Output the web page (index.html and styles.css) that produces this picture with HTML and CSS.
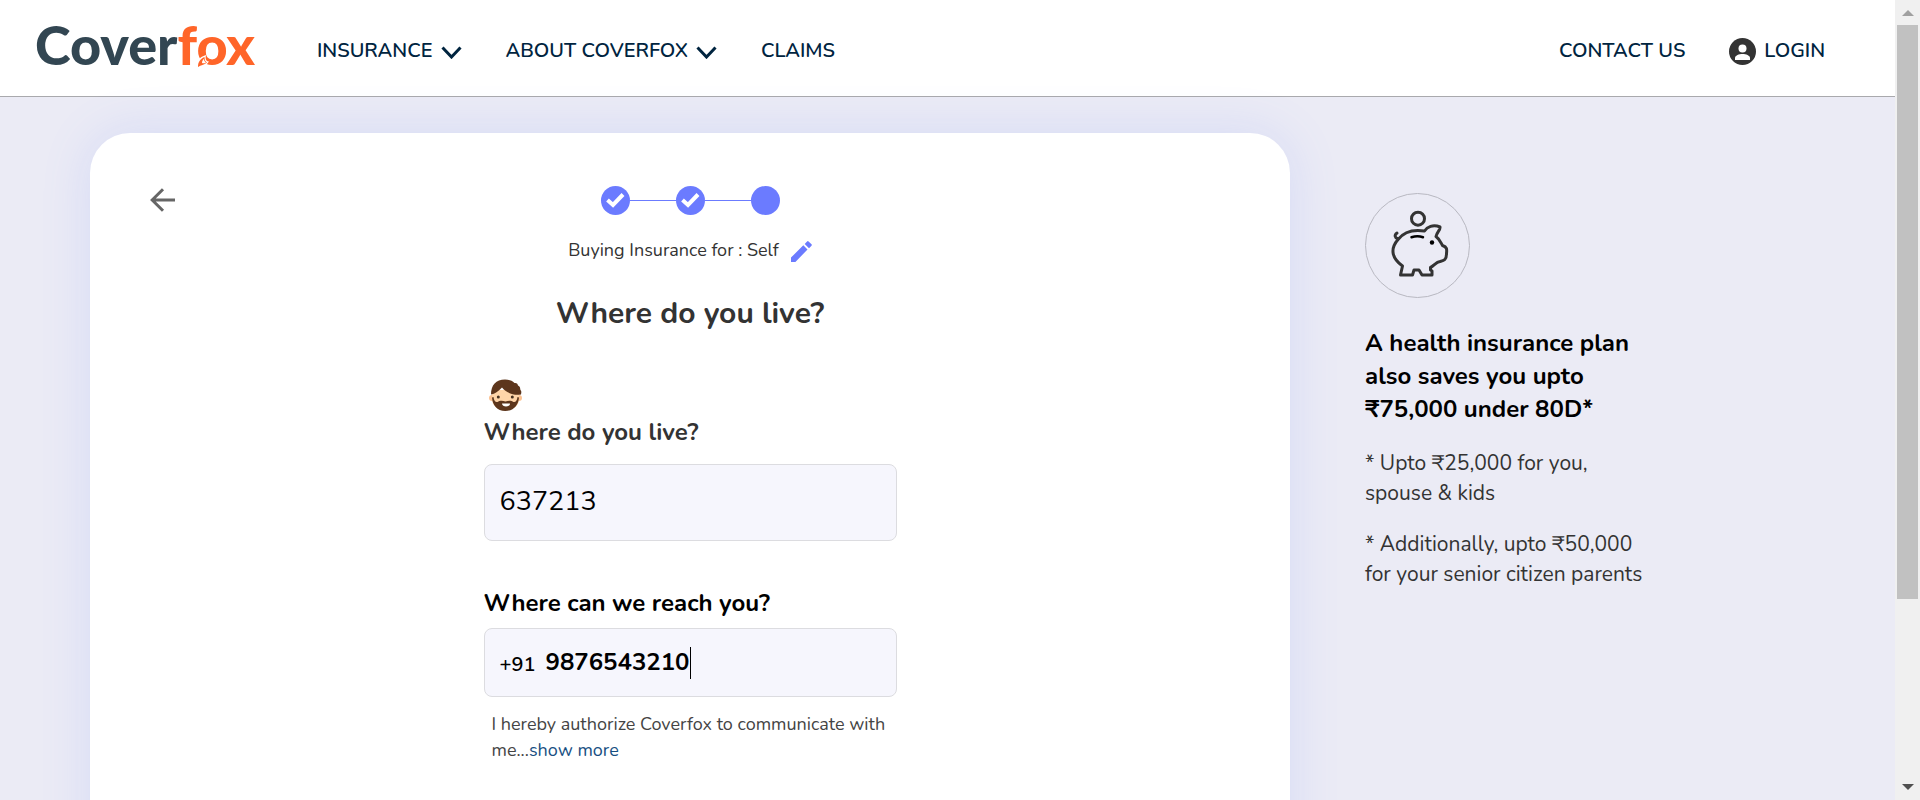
FILE: index.html
```html
<!DOCTYPE html>
<html lang="en">
<head>
<meta charset="utf-8">
<meta name="viewport" content="width=device-width, initial-scale=1">
<title>Coverfox</title>
<link rel="stylesheet" href="styles.css">
</head>
<body>
<div class="window">
  <div class="page">
    <header class="header">
      <a class="logo" href="#" aria-label="Coverfox">Cover<span class="logo-fox">fox</span><svg class="logo-tail" viewBox="0 0 12 13" aria-hidden="true"><path d="M0 13C-1 7 2 2 9 0C8 4 9 6 12 6.500C9 11 5 11 0 13Z" fill="#fff"/><path d="M1 12C1 7 3 4 7.500 2C7.500 5 8.500 7 10 7.500C7 10 4 10 1 12z" fill="#ff6529"/><path d="M5 8C5 6 6 4.500 7 4C7 6 8 7 9 7.500C7.500 8.500 6 8.500 5 8z" fill="#fff"/></svg></a>
      <nav class="nav">
        <a href="#">INSURANCE <svg class="chevron" viewBox="0 0 21 13"><path d="M1.500 1.500L10.500 11L19.500 1.500"/></svg></a>
        <a href="#">ABOUT COVERFOX <svg class="chevron" viewBox="0 0 21 13"><path d="M1.500 1.500L10.500 11L19.500 1.500"/></svg></a>
        <a href="#">CLAIMS</a>
      </nav>
      <nav class="nav account">
        <a href="#">CONTACT US</a>
        <a href="#"><svg class="user" viewBox="0 0 27 27"><circle cx="13.500" cy="13.500" r="13.500" fill="#333"/><circle cx="13.500" cy="10.500" r="4" fill="#fff"/><path d="M6 22v-2c0-2.500 4-4 7.500-4s7.500 1.500 7.500 4v2z" fill="#fff"/></svg>LOGIN</a>
      </nav>
    </header>
    <main class="content">
      <section class="card">
        <button class="back" type="button" aria-label="Back"><svg viewBox="0 0 25 24"><path d="M25 12H3M13 1.200L2.200 12L13 22.800"/></svg></button>
        <form class="quote">
          <ol class="steps" aria-label="Progress">
            <li><svg viewBox="0 0 29 29"><path d="M6.500 14L12 19L22 8.500"/></svg></li>
            <li><svg viewBox="0 0 29 29"><path d="M6.500 14L12 19L22 8.500"/></svg></li>
            <li></li>
          </ol>
          <p class="buying">Buying Insurance for : Self
            <button type="button" class="edit" aria-label="Edit"><svg viewBox="0 0 21 21"><path d="M0 16.600V21h4.400L16.500 8.500L12.300 4.300zM13.700 3l4.300 4.200l2.500-2.500q.7-.7 0-1.400L17.600.5q-.8-.8-1.500 0z"/></svg></button></p>
          <h1>Where do you live?</h1>
          <svg class="face" viewBox="0 0 33 32" aria-hidden="true"><circle cx="3" cy="19" r="3" fill="#fcc393"/><circle cx="30" cy="19" r="3" fill="#fcc393"/><path d="M3 11h27v9c0 7-6 11-13.500 11S3 27 3 20z" fill="#ffd5a8"/><path d="M2 15.500C2 6 7 .5 16 .5c4 0 7 1 9.500 3.500c2-.5 3.500 1 3.500 2.500c2.500 1 2 3 2.500 4.500c1 1 1 2 .5 4.500c-7 1-14-1-19-7C9 12.500 6 15 2 15.500z" fill="#5d361c"/><path d="M3 18.500C3.500 26 8 32 16.300 32S29.500 26 30 18.500l-1.500-.5c-.5 4-2 5.500-4 5c-2-1.500-5-1.500-8-.5c-3-1-6-1-8 .5c-2 .5-3.500-1-4-5z" fill="#5d361c"/><path d="M13 24.500h8c0 2-2 3-4 3s-4-1-4-3z" fill="#fff"/><circle cx="9.300" cy="18" r="1.500" fill="#45301f"/><circle cx="23.300" cy="18" r="1.500" fill="#45301f"/></svg>
          <label class="label" for="pin">Where do you live?</label>
          <input class="box pin" id="pin" type="text" inputmode="numeric" value="637213">
          <label class="label label-phone" for="phone">Where can we reach you?</label>
          <div class="box phone"><span class="code">+91</span><input id="phone" type="tel" value="9876543210"><span class="caret"></span></div>
          <p class="consent">I hereby authorize Coverfox to communicate with me...<a href="#">show more</a></p>
        </form>
      </section>
      <aside class="benefit">
        <svg class="pig" viewBox="0 0 105 105" aria-hidden="true"><circle cx="52.500" cy="52.500" r="52" fill="none" stroke="#b8b8c1"/><g fill="none" stroke="#333" stroke-width="3" stroke-linejoin="round" stroke-linecap="round"><circle cx="53" cy="25.700" r="6.500"/><path d="M32 40c-3 2-2 5 .5 5.500"/><path d="M33 46.500C38 40 47 36 59.500 38C62 34 68 31 75 34C75.500 37 72 39 71 43.500C74.500 46 75.500 49 77.500 52.500C82 54 82 56 81.500 60.500C81.500 67 79 67.500 75 68.500C71 69 69 73 65.500 74.500V77L67 78V82H57L54 77H49L47.500 82H35.500L37.500 73C28 66 24 57 33 46.500z"/></g><path d="M46.500 44.200Q52.500 42.500 58 44.200" fill="none" stroke="#000" stroke-width="2.500" stroke-linecap="round"/><circle cx="67" cy="49.500" r="2.200"/></svg>
        <h2>A health insurance plan also saves you upto ₹75,000 under 80D*</h2>
        <p>* Upto ₹25,000 for you, spouse &amp; kids</p>
        <p>* Additionally, upto ₹50,000 for your senior citizen parents</p>
      </aside>
    </main>
  </div>
  <div class="scrollbar" aria-hidden="true"><span class="up"></span><span class="thumb"></span><span class="down"></span></div>
</div>
</body>
</html>
```
FILE: styles.css
```css
* { box-sizing: border-box; }
body { margin: 0; font-family: Nunito, Lato, "Open Sans", sans-serif; color: #333; background: #ebebf5; }
a { color: inherit; text-decoration: none; }
button { border: 0; padding: 0; background: none; cursor: pointer; }
input { font: inherit; color: #000; }
svg { display: block; }
h1, h2, p { margin: 0; }

.window { display: grid; grid-template-columns: minmax(0, 1fr) 25px; height: 100vh; }
.page { overflow: hidden; }

.header { display: flex; align-items: center; height: 97px; padding: 6px 70px 0 35px; background: #fff; border-bottom: 1px solid #a9a9ad; }
.logo { position: relative; width: 220px; margin: -12px 62px 0 0; font-family: Lato, sans-serif; font-size: 54px; font-weight: 900; line-height: 80px; color: #324652; }
.logo-fox { color: #ff6529; }
.logo-tail { position: absolute; left: 162px; top: 50px; width: 12px; height: 13px; }
.nav { display: flex; align-items: center; gap: 44px; font-size: 20px; font-weight: 600; line-height: 28px; color: #00243f; }
.nav a { display: flex; align-items: center; gap: 8px; }
.account { margin-left: auto; }
.chevron { width: 21px; height: 13px; margin-top: 3px; fill: none; stroke: #00243f; stroke-width: 3; }
.user { width: 27px; height: 27px; }

.content { display: flex; align-items: flex-start; gap: 75px; padding: 36px 90px 0; }
.card { flex: 0 1 1200px; display: grid; grid-template-columns: 1fr 413px 1fr; min-height: 900px; padding: 53px 60px; background: #fff; border-radius: 40px; box-shadow: 0 0 50px rgba(100, 130, 255, .16); }
.back { align-self: start; justify-self: start; margin-top: 2px; }
.back svg { width: 25px; height: 24px; fill: none; stroke: #666; stroke-width: 3; }
.quote { display: flex; flex-direction: column; }

.steps { display: flex; align-items: center; align-self: center; gap: 46px; margin: 0; padding: 0; list-style: none; }
.steps li { position: relative; width: 29px; height: 29px; border-radius: 50%; background: #6b7bff; }
.steps li + li::before { content: ""; position: absolute; right: 29px; top: 14px; width: 46px; height: 1px; background: #6b7bff; }
.steps svg { fill: none; stroke: #fff; stroke-width: 4; }
.buying { display: flex; justify-content: center; align-items: center; gap: 12px; margin-top: 22px; font-size: 18px; line-height: 26px; }
.edit svg { width: 21px; height: 21px; margin-top: 3px; fill: #6b7bff; }
h1 { margin-top: 31px; font-size: 30px; line-height: 40px; font-weight: 700; text-align: center; }
.face { width: 33px; height: 32px; margin: 45px 0 0 5px; }
.label { margin-top: 5px; font-size: 24px; line-height: 32px; font-weight: 700; }
.box { width: 100%; padding: 0 15px; background: #f6f6fd; border: 1px solid #dcdce0; border-radius: 8px; }
.pin { height: 77px; margin-top: 16px; padding-bottom: 3px; font-size: 27px; }
.label-phone { margin-top: 46px; color: #000; }
.phone { display: flex; align-items: center; height: 69px; margin-top: 9px; font-weight: 700; }
.code { margin: 4px 10px 0 0; font-size: 20px; font-weight: 600; color: #000; }
.phone input { width: 144px; height: 34px; margin-bottom: 2px; padding: 0; border: 0; background: none; font-size: 24px; outline: 0; }
.caret { width: 1px; height: 32px; background: #000; }
.consent { margin-top: 14px; padding-left: 8px; font-size: 18px; line-height: 26px; color: #444; }
.consent a { color: #174f82; }

.benefit { flex: 0 0 290px; padding-top: 60px; }
.pig { width: 105px; height: 105px; }
.benefit h2 { margin: 29px 0 22px; font-size: 24px; line-height: 33px; font-weight: 700; color: #000; }
.benefit p { margin-bottom: 21px; font-size: 21px; line-height: 30px; }

.scrollbar { display: flex; flex-direction: column; align-items: center; padding: 10px 2px; background: #f0f0f0; }
.up { border: 6px solid transparent; border-top: 0; border-bottom-color: #a0a0a0; }
.thumb { width: 21px; height: 574px; margin-top: 9px; background: #c1c1c1; }
.down { margin-top: auto; border: 6px solid transparent; border-bottom: 0; border-top-color: #505050; }
```
